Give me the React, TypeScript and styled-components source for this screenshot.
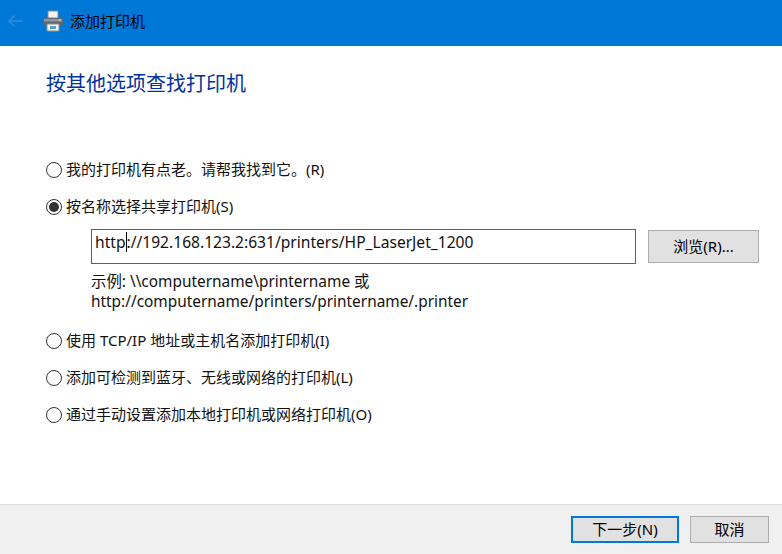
import React from 'react';
import styled, { createGlobalStyle } from 'styled-components';

const GlobalStyle = createGlobalStyle`
  html, body {
    margin: 0;
    padding: 0;
    background: #fff;
  }
  body {
    font-family: "Noto Sans", "Noto Sans CJK SC", sans-serif;
    color: #111;
  }
`;

const Window = styled.div`
  width: 782px;
  height: 554px;
  display: flex;
  flex-direction: column;
  overflow: hidden;
`;

const TitleBar = styled.header`
  box-sizing: border-box;
  height: 46px;
  flex: none;
  background: #0078d7;
  display: flex;
  align-items: center;
  padding: 0 0 4px 7px;
`;

const BackButton = styled.div`
  width: 17px;
  height: 14px;
  margin-right: 19px;
  display: flex;
`;

const PrinterBox = styled.div`
  width: 20px;
  height: 22px;
  margin-right: 7px;
  display: flex;
`;

const TitleText = styled.span`
  font-size: 15px;
  color: #000;
  line-height: 20px;
`;

const Main = styled.main`
  flex: 1;
  padding: 25px 0 0 46px;
`;

const Heading = styled.h1`
  margin: 0 0 54px;
  font-size: 20px;
  font-weight: 400;
  line-height: 26px;
  color: #003399;
`;

const OptionRow = styled.div`
  height: 37px;
  display: flex;
  align-items: center;
`;

const Radio = styled.span<{ $checked?: boolean }>`
  box-sizing: border-box;
  width: 16px;
  height: 16px;
  flex: none;
  margin-right: 4px;
  border-radius: 50%;
  border: 1px solid #333;
  background: #fff;
  display: flex;
  align-items: center;
  justify-content: center;
  &::after {
    content: '';
    display: ${(p) => (p.$checked ? 'block' : 'none')};
    width: 10px;
    height: 10px;
    border-radius: 50%;
    background: #333;
  }
`;

const OptionLabel = styled.span`
  font-size: 15px;
  line-height: 20px;
  padding-bottom: 2px;
`;

const SharedBlock = styled.div`
  padding: 4px 23px 10px 45px;
`;

const PathRow = styled.div`
  display: flex;
  align-items: center;
  gap: 12px;
`;

const PathField = styled.div`
  box-sizing: border-box;
  width: 545px;
  height: 35px;
  border: 1px solid #0078d7;
  padding: 0 3px 9px;
  display: flex;
  align-items: center;
  font-size: 15.6px;
  white-space: pre;
`;

const Caret = styled.span`
  width: 1px;
  height: 20px;
  background: #000;
  flex: none;
`;

const Button = styled.div<{ $width: number; $primary?: boolean }>`
  box-sizing: border-box;
  width: ${(p) => p.$width}px;
  display: flex;
  align-items: center;
  justify-content: center;
  background: #e1e1e1;
  border: ${(p) => (p.$primary ? '2px solid #0078d7' : '1px solid #adadad')};
  padding-bottom: 2px;
  font-size: 15px;
  color: #000;
`;

const BrowseButton = styled(Button)`
  height: 33px;
`;

const Hint = styled.div`
  margin-top: 8px;
  font-size: 15.4px;
  line-height: 20px;
`;

const Footer = styled.footer`
  box-sizing: border-box;
  height: 50px;
  flex: none;
  background: #f0f0f0;
  border-top: 1px solid #dfdfdf;
  display: flex;
  justify-content: flex-end;
  align-items: flex-start;
  gap: 11px;
  padding: 11px 13px 0 0;
`;

const FooterButton = styled(Button)`
  height: 27px;
`;

const ArrowIcon = () => (
  <svg width="17" height="14" viewBox="0 0 17 14" fill="none" stroke="#2f8bd8" strokeWidth="1.6">
    <path d="M16 7H2M7.5 1.5 2 7l5.500 5.500" />
  </svg>
);

const PrinterIcon = () => (
  <svg width="20" height="22" viewBox="0 0 20 22">
    <path d="M5 1h10v7H5z" fill="#f4f4f4" stroke="#8c8c8c" />
    <path d="M1.500 8h17a1.500 1.500 0 0 1 1.500 1.500V15a1 1 0 0 1-1 1H1a1 1 0 0 1-1-1V9.500A1.500 1.500 0 0 1 1.500 8z" fill="#5c6670" />
    <path d="M1 9h18v2.500H1z" fill="#8e969e" />
    <path d="M4 14h12v7H4z" fill="#f4f4f4" stroke="#8c8c8c" />
    <path d="M7 16h6v3H7z" fill="#57a5c4" />
    <path d="M15.500 9.500h2v1h-2z" fill="#d6efff" />
  </svg>
);

const App = () => (
  <Window>
    <GlobalStyle />
    <TitleBar>
      <BackButton>
        <ArrowIcon />
      </BackButton>
      <PrinterBox>
        <PrinterIcon />
      </PrinterBox>
      <TitleText>添加打印机</TitleText>
    </TitleBar>
    <Main>
      <Heading>按其他选项查找打印机</Heading>
      <OptionRow>
        <Radio />
        <OptionLabel>我的打印机有点老。请帮我找到它。(R)</OptionLabel>
      </OptionRow>
      <OptionRow>
        <Radio $checked />
        <OptionLabel>按名称选择共享打印机(S)</OptionLabel>
      </OptionRow>
      <SharedBlock>
        <PathRow>
          <PathField>
            http
            <Caret />
            ://192.168.123.2:631/printers/HP_LaserJet_1200
          </PathField>
          <BrowseButton $width={111}>浏览(R)...</BrowseButton>
        </PathRow>
        <Hint>
          示例: \\computername\printername 或
          <br />
          http://computername/printers/printername/.printer
        </Hint>
      </SharedBlock>
      <OptionRow>
        <Radio />
        <OptionLabel>使用 TCP/IP 地址或主机名添加打印机(I)</OptionLabel>
      </OptionRow>
      <OptionRow>
        <Radio />
        <OptionLabel>添加可检测到蓝牙、无线或网络的打印机(L)</OptionLabel>
      </OptionRow>
      <OptionRow>
        <Radio />
        <OptionLabel>通过手动设置添加本地打印机或网络打印机(O)</OptionLabel>
      </OptionRow>
    </Main>
    <Footer>
      <FooterButton $width={108} $primary>下一步(N)</FooterButton>
      <FooterButton $width={79}>取消</FooterButton>
    </Footer>
  </Window>
);

export default App;
